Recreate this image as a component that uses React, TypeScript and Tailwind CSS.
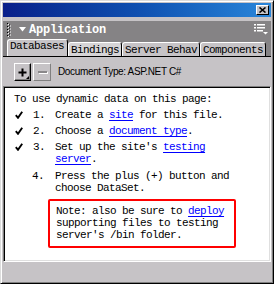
import React from 'react';

const Check = () => (
  <svg width="8" height="8" viewBox="0 0 8 8" className="block">
    <path d="M0.8 4.2 L3 6.8 L7.2 0.8" stroke="#000" strokeWidth="1.9" fill="none" />
  </svg>
);

const Link = ({ children }: { children: React.ReactNode }) => (
  <span className="text-[#0000ff] underline underline-offset-[2px]">{children}</span>
);

const tabs = [
  { label: 'Databases', w: 'w-[61px]', raised: true },
  { label: 'Bindings', w: 'w-[54px]', active: true },
  { label: 'Server Behav', w: 'w-[78px]' },
  { label: 'Components', w: 'w-[66px]' },
];

export default function App() {
  return (
    <div className="w-[274px] h-[284px] flex flex-col bg-[#c6c3c6] border-t border-l border-[#dcdcdc] border-r-black border-b-black border-r border-b shadow-[inset_1px_1px_0_#ffffff,inset_-1px_-1px_0_#808080] p-[2px] font-['Liberation_Mono','DejaVu_Sans_Mono',monospace] text-[11px] leading-[12px] tracking-[-0.6px] text-black overflow-hidden">
      {/* title bar */}
      <div className="h-[14px] flex items-center justify-end pr-[2px] bg-gradient-to-r from-[#0a1f8a] via-[#0f4fb0] to-[#2a86da]">
        <div className="w-[13px] h-[10px] bg-[#c6c3c6] border-t border-l border-white border-r border-b border-r-black border-b-black flex items-center justify-center">
          <svg width="7" height="6" viewBox="0 0 7 6">
            <path d="M0.5 0.5 L6.5 5.5 M6.5 0.5 L0.5 5.5" stroke="#000" strokeWidth="1.6" />
          </svg>
        </div>
      </div>

      {/* panel header + tabs */}
      <div className="mt-[4px] bg-[#858385]">
        <div className="h-[17px] flex items-center">
          <svg width="4" height="14" viewBox="0 0 4 14" className="ml-[4px]">
            {[0, 3, 6, 9, 12].map((y) => (
              <g key={y}>
                <rect x="0" y={y} width="1" height="1" fill="#000" />
                <rect x="1" y={y + 1} width="1" height="1" fill="#fff" />
                <rect x="2" y={y + 1.5} width="1" height="1" fill="#000" />
                <rect x="3" y={y + 2.5} width="1" height="1" fill="#fff" />
              </g>
            ))}
          </svg>
          <svg width="7" height="5" viewBox="0 0 7 5" className="ml-[8px]">
            <polygon points="0,0 7,0 3.5,4.5" fill="#fff" />
          </svg>
          <span className="ml-[3px] text-white font-bold text-[12px] tracking-[-0.2px]">Application</span>
          <svg width="14" height="11" viewBox="0 0 14 11" className="ml-auto mr-[3px]">
            <rect x="0" y="0" width="2" height="1.5" fill="#fff" />
            <rect x="3" y="0" width="8" height="1.5" fill="#fff" />
            <rect x="0" y="3" width="2" height="1.5" fill="#fff" />
            <rect x="3" y="3" width="8" height="1.5" fill="#fff" />
            <rect x="0" y="6" width="2" height="1.5" fill="#fff" />
            <rect x="3" y="6" width="6" height="1.5" fill="#fff" />
            <polygon points="9,8 14,8 11.5,10.5" fill="#fff" />
          </svg>
        </div>
        <div className="h-[19px] flex items-end pl-[4px] border-b border-black">
          {tabs.map((t) => (
            <div
              key={t.label}
              className={`${t.w} ${t.raised ? 'h-[17px] pt-0' : 'h-[14px] pt-[1px]'} ${t.active ? 'bg-[#d6d4d6]' : 'bg-[#c6c3c6]'} border-t border-l border-white border-r border-r-black rounded-t-[3px] px-[2px] whitespace-nowrap overflow-hidden`}
            >
              {t.label}
            </div>
          ))}
        </div>
      </div>

      {/* toolbar */}
      <div className="h-[29px] flex items-center pl-[11px] pt-[1px]">
        <div className="relative w-[17px] h-[18px] border-t border-l border-white border-r border-b border-r-black border-b-black shadow-[inset_-1px_-1px_0_#808080] flex items-center justify-center">
          <svg width="9" height="9" viewBox="0 0 9 9">
            <path d="M4.5 0.5 V8.5 M0.5 4.5 H8.5" stroke="#000" strokeWidth="2" />
          </svg>
          <svg width="3" height="3" viewBox="0 0 3 3" className="absolute right-[1px] bottom-[1px]">
            <polygon points="0,3 3,3 3,0" fill="#000" />
          </svg>
        </div>
        <div className="ml-[2px] w-[18px] h-[18px] border-t border-l border-white border-r border-b border-r-[#808080] border-b-[#808080] flex items-center justify-center">
          <div className="w-[9px] h-[2px] bg-[#8a888a] shadow-[1px_1px_0_#fff]" />
        </div>
        <span className="ml-[7px] font-['Liberation_Sans','Arial',sans-serif] text-[10px] tracking-[-0.35px]">
          Document Type: ASP.NET C#
        </span>
      </div>

      {/* content */}
      <div className="h-[176px] bg-white border border-t-[#808080] border-l-[#808080] border-r-white border-b-white shadow-[inset_1px_1px_0_#000,inset_-1px_-1px_0_#dfdfdf] pl-[10px] pt-[6px]">
        <div>To use dynamic data on this page:</div>
        <div className="mt-[4px] flex">
          <span className="w-[19px] pl-[1px] pt-[2px]"><Check /></span>
          <span className="w-[22px]">1.</span>
          <span>Create a <Link>site</Link> for this file.</span>
        </div>
        <div className="mt-[4px] flex">
          <span className="w-[19px] pl-[1px] pt-[2px]"><Check /></span>
          <span className="w-[22px]">2.</span>
          <span>Choose a <Link>document type</Link>.</span>
        </div>
        <div className="mt-[4px] flex">
          <span className="w-[19px] pl-[1px] pt-[2px]"><Check /></span>
          <span className="w-[22px]">3.</span>
          <span>
            Set up the site's <Link>testing</Link>
            <br />
            <Link>server</Link>.
          </span>
        </div>
        <div className="mt-[5px] flex">
          <span className="w-[19px]" />
          <span className="w-[22px] -ml-[1px] mr-[1px]">4.</span>
          <span>
            Press the plus (+) button and
            <br />
            choose DataSet.
          </span>
        </div>
        <div className="mt-[5px] ml-[34px] w-[188px] border-2 border-[#ff0000] rounded-[2px] pl-[6px] pt-[4px] pb-[5px]">
          Note: also be sure to <Link>deploy</Link>
          <br />
          supporting files to testing
          <br />
          server's /bin folder.
        </div>
      </div>
    </div>
  );
}
